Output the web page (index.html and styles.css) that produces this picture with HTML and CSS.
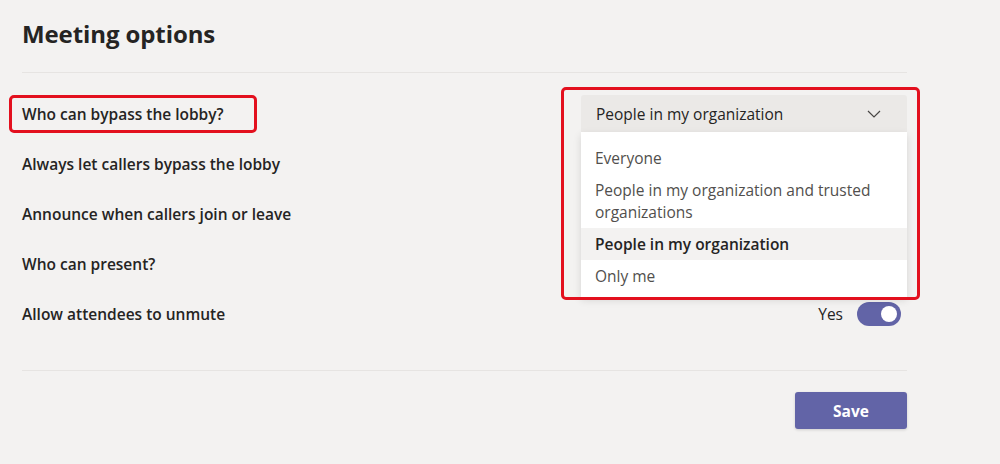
FILE: index.html
```html
<!DOCTYPE html>
<html lang="en">
<head>
<meta charset="utf-8">
<title>Meeting options</title>
<link rel="stylesheet" href="styles.css">
</head>
<body>
<div class="page">
  <header class="header">
    <h1 class="title">Meeting options</h1>
  </header>
  <section class="options">
    <div class="row">
      <span class="label label-marked">Who can bypass the lobby?</span>
      <div class="dropdown">
        <div class="dropdown-head">
          <span>People in my organization</span>
          <svg class="chev" width="14" height="8" viewBox="0 0 14 8"><path d="M1 1 L7 7 L13 1" fill="none" stroke="#484644" stroke-width="1.2"/></svg>
        </div>
        <ul class="menu">
          <li class="item">Everyone</li>
          <li class="item">People in my organization and trusted organizations</li>
          <li class="item selected">People in my organization</li>
          <li class="item">Only me</li>
        </ul>
        <div class="annot"></div>
      </div>
    </div>
    <div class="row"><span class="label">Always let callers bypass the lobby</span></div>
    <div class="row"><span class="label">Announce when callers join or leave</span></div>
    <div class="row"><span class="label">Who can present?</span></div>
    <div class="row">
      <span class="label">Allow attendees to unmute</span>
      <div class="toggle-wrap">
        <span class="yes">Yes</span>
        <span class="toggle"><span class="knob"></span></span>
      </div>
    </div>
  </section>
  <footer class="footer">
    <button class="save">Save</button>
  </footer>
</div>
</body>
</html>
```

FILE: styles.css
```css
* { box-sizing: border-box; }
html, body { margin: 0; padding: 0; }
body {
  background: #f3f2f1;
  font-family: "Open Sans", "Noto Sans", sans-serif;
  color: #252423;
  width: 1000px;
  height: 464px;
  overflow: hidden;
}
.page {
  margin-left: 22px;
  width: 885px;
}
.header {
  height: 73px;
  padding-top: 18px;
  border-bottom: 1px solid #e6e4e2;
}
.title {
  margin: 0;
  font-size: 24px;
  line-height: 32px;
  font-weight: 700;
  letter-spacing: -0.1px;
}
.options {
  padding-top: 16px;
}
.row {
  height: 50px;
  display: flex;
  align-items: center;
  justify-content: space-between;
  position: relative;
}
.label {
  font-size: 15.5px;
  font-weight: 600;
  line-height: 22px;
}
.label-marked {
  border: 3px solid #e3101e;
  border-radius: 5px;
  margin-left: -13px;
  padding: 5px 30px 5px 10px;
}
.dropdown {
  position: relative;
  width: 326px;
  align-self: flex-start;
  margin-top: 6px;
}
.dropdown-head {
  height: 37px;
  background: #ebe9e7;
  border-radius: 3px 3px 0 0;
  display: flex;
  align-items: center;
  justify-content: space-between;
  padding: 0 26px 0 15px;
  font-size: 15.5px;
}
.menu {
  position: absolute;
  top: 37px;
  left: 0;
  width: 326px;
  margin: 0;
  padding: 10px 0 5px;
  list-style: none;
  background: #ffffff;
  box-shadow: 0 3px 8px rgba(0,0,0,0.12);
  z-index: 2;
}
.item {
  padding: 5px 30px 5px 14px;
  font-size: 15.5px;
  line-height: 22px;
  color: #514f4d;
}
.item.selected {
  background: #f3f2f1;
  font-weight: 600;
  color: #252423;
}
.annot {
  position: absolute;
  top: -8px;
  left: -20px;
  width: 359px;
  height: 213px;
  border: 3px solid #e3101e;
  border-radius: 5px;
  z-index: 3;
  pointer-events: none;
}
.toggle-wrap {
  display: flex;
  align-items: center;
  gap: 14px;
  margin-right: 6px;
}
.yes {
  font-size: 15.5px;
}
.toggle {
  width: 44px;
  height: 24px;
  border-radius: 12px;
  background: #6264a7;
  display: flex;
  align-items: center;
  justify-content: flex-end;
  padding: 0 4px;
}
.knob {
  width: 16px;
  height: 16px;
  border-radius: 50%;
  background: #ffffff;
}
.footer {
  margin-top: 31px;
  border-top: 1px solid #e6e4e2;
  padding-top: 21px;
  display: flex;
  justify-content: flex-end;
}
.save {
  width: 112px;
  height: 37px;
  border: none;
  border-radius: 3px;
  background: #6264a7;
  color: #ffffff;
  font-family: inherit;
  font-size: 15.5px;
  font-weight: 700;
  box-shadow: 0 1px 3px rgba(0,0,0,0.15);
}
```
